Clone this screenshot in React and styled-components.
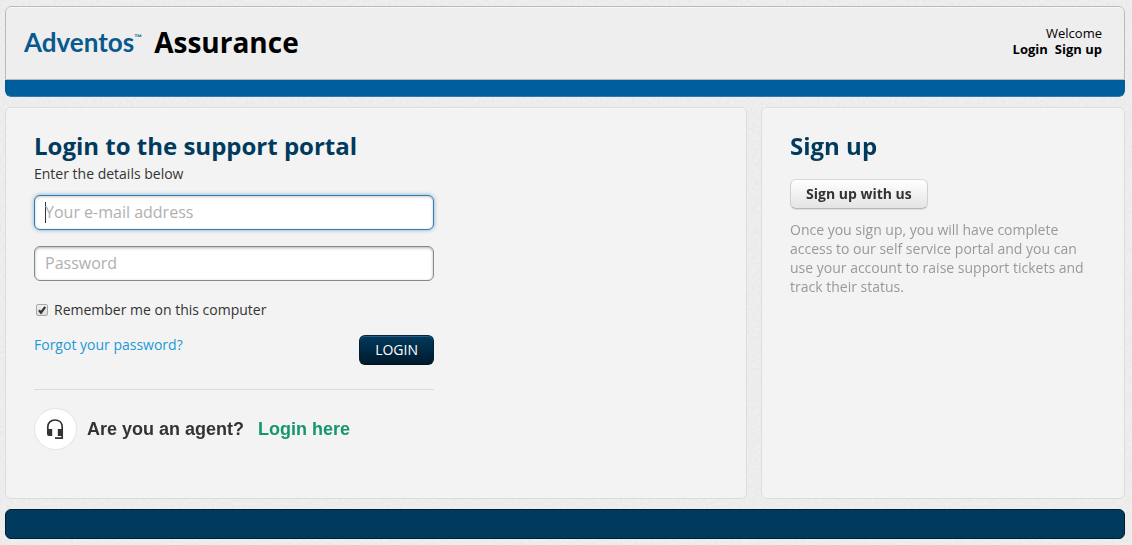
import React from "react";
import styled, { createGlobalStyle } from "styled-components";

const GlobalStyle = createGlobalStyle`
  *, *::before, *::after { box-sizing: border-box; }
  body {
    margin: 0;
    background: #efefef;
    color: #333;
    font-family: "Open Sans", "Noto Sans", sans-serif;
    font-size: 14px;
    line-height: 19px;
  }
  h1, h2, p { margin: 0; }
  a { text-decoration: none; }
  input, button { font-family: inherit; }
`;

const Texture = styled.svg`
  position: fixed;
  inset: 0;
  z-index: -1;
  width: 100%;
  height: 100%;
`;

const Page = styled.div`
  display: flex;
  flex-direction: column;
  gap: 10px;
  padding: 6px 7px 6px 5px;
`;

const Header = styled.header`
  border-radius: 6px;
  overflow: hidden;
`;

const Masthead = styled.div`
  display: flex;
  justify-content: space-between;
  align-items: center;
  min-height: 74px;
  padding: 0 22px 4px 18px;
  background: #eee;
  border: 1px solid #b9b9b9;
  border-radius: 6px 6px 0 0;
  box-shadow: inset 0 1px 0 #f8f8f8;
`;

const Brand = styled.div`
  display: flex;
  align-items: center;
  gap: 12px;
  padding-top: 2px;
`;

const Logo = styled.a`
  display: flex;
  color: #075990;
  font-family: Lato, sans-serif;
  font-size: 26px;
  font-weight: 700;
  line-height: 36px;
`;

const Trademark = styled.span`
  font-family: "Liberation Sans", sans-serif;
  font-size: 8px;
  line-height: 28px;
`;

const BrandTitle = styled.h1`
  color: #000;
  font-size: 28px;
  font-weight: 700;
  line-height: 36px;
`;

const Account = styled.nav`
  color: #000;
  font-size: 13px;
  line-height: 16px;
  text-align: right;
  a { color: #000; font-weight: 700; }
`;

const AccountLinks = styled.div`
  display: flex;
  justify-content: flex-end;
  gap: 7px;
`;

const AccentBar = styled.div`
  height: 17px;
  background: #005e9c;
  border-bottom: 1px solid #2d7cb0;
  border-radius: 0 0 6px 6px;
`;

const Columns = styled.main`
  display: grid;
  grid-template-columns: minmax(0, 53fr) minmax(0, 26fr);
  gap: 14px;
`;

const Card = styled.section`
  min-height: 392px;
  padding: 22px 28px 48px;
  background: #f3f3f3;
  border: 1px solid #dcdcdc;
  border-radius: 6px;
  box-shadow: inset 0 1px 0 #f8f8f8;
`;

const Heading = styled.h2`
  padding-bottom: 2px;
  color: #003a5d;
  font-size: 24px;
  font-weight: 700;
  line-height: 32px;
`;

const Form = styled.form`
  display: flex;
  flex-direction: column;
  max-width: 400px;
`;

const Fields = styled.div`
  display: flex;
  flex-direction: column;
  gap: 16px;
  padding-top: 12px;
`;

const Field = styled.input`
  width: 100%;
  height: 35px;
  padding: 0 10px 2px;
  color: #333;
  background: #fff;
  border: 1px solid #888;
  border-radius: 6px;
  outline: none;
  box-shadow: inset 0 1px 3px rgba(0, 0, 0, 0.3);
  font-size: 16px;
  &::placeholder { color: #b0b0b0; opacity: 1; }
  &:focus {
    border-color: #2e7db3;
    box-shadow: 0 0 4px rgba(46, 125, 179, 0.6), inset 0 1px 3px rgba(0, 0, 0, 0.2);
  }
  &:focus:placeholder-shown {
    caret-color: transparent;
    background: linear-gradient(#333, #333) 10px 6px / 1px 21px no-repeat #fff;
  }
`;

const Remember = styled.label`
  display: flex;
  align-items: center;
  gap: 6px;
  padding: 19px 0 0 2px;
`;

const TickBox = styled.span`
  display: grid;
  width: 12px;
  height: 12px;
  input, svg { grid-area: 1 / 1; width: 12px; height: 12px; margin: 0; }
  input {
    appearance: none;
    background: linear-gradient(#f0f0f0, #dcdcdc);
    border: 1px solid #a8a8a8;
    border-radius: 2px;
  }
  svg { pointer-events: none; }
  input:not(:checked) + svg { visibility: hidden; }
`;

const Actions = styled.div`
  display: flex;
  justify-content: space-between;
  align-items: flex-start;
  padding: 16px 0 24px;
  border-bottom: 1px solid #dbdbdb;
`;

const ForgotLink = styled.a`
  color: #2199d8;
`;

const Button = styled.button`
  height: 30px;
  padding: 0 15px 2px;
  border: 1px solid;
  border-radius: 6px;
  font-size: 14px;
  line-height: 19px;
`;

const LoginButton = styled(Button)`
  color: #fff;
  background: linear-gradient(#003a5f, #001a2b);
  border-color: #00263f #001f33 #00121f;
  box-shadow: inset 0 1px 0 #2b5c7c;
`;

const SignUpButton = styled(Button)`
  margin: 15px 0 11px;
  color: #333;
  background: linear-gradient(#fff, #e4e4e4);
  border-color: #d8d8d8 #d0d0d0 #b8b8b8;
  box-shadow: 0 1px 1px rgba(0, 0, 0, 0.08);
  font-weight: 700;
`;

const Agent = styled.div`
  display: flex;
  align-items: center;
  padding-top: 18px;
  font-family: "Liberation Sans", Arial, sans-serif;
  font-size: 18px;
  font-weight: 700;
  line-height: 24px;
  a { margin-left: 14px; color: #169670; }
`;

const AgentBadge = styled.span`
  display: grid;
  place-items: center;
  width: 43px;
  height: 42px;
  margin-right: 10px;
  background: #fff;
  border: 1px solid #e4e4e4;
  border-radius: 50%;
`;

const Note = styled.p`
  color: #999;
`;

const Footer = styled.footer`
  height: 30px;
  background: #003a5d;
  border: 1px solid #001e30;
  border-radius: 6px;
`;

function HeadsetIcon() {
  return (
    <svg width="19" height="22" viewBox="0 0 19 22" aria-hidden="true">
      <path d="M1.8 12V9C1.8 4.8 4.8 2 9 2s7.2 2.8 7.2 7v11.2H9" fill="none" stroke="#333" strokeWidth="1.7" />
      <path d="M1 11h5.2v7H3a2 2 0 0 1-2-2zM11.8 11H17v7h-5.2z" fill="#333" />
    </svg>
  );
}

export default function App() {
  return (
    <>
      <GlobalStyle />
      <Texture aria-hidden="true">
        <filter id="paper">
          <feTurbulence type="fractalNoise" baseFrequency="0.35" numOctaves="2" stitchTiles="stitch" />
          <feColorMatrix values="0 0 0 0 0  0 0 0 0 0  0 0 0 0 0  0.05 0 0 0 -0.015" />
        </filter>
        <rect width="100%" height="100%" filter="url(#paper)" />
      </Texture>
      <Page>
        <Header>
          <Masthead>
            <Brand>
              <Logo href="#">Adventos<Trademark>™</Trademark></Logo>
              <BrandTitle>Assurance</BrandTitle>
            </Brand>
            <Account>
              <div>Welcome</div>
              <AccountLinks>
                <a href="#login">Login</a>
                <a href="#signup">Sign up</a>
              </AccountLinks>
            </Account>
          </Masthead>
          <AccentBar />
        </Header>
        <Columns>
          <Card id="login">
            <Heading>Login to the support portal</Heading>
            <p>Enter the details below</p>
            <Form onSubmit={(e) => e.preventDefault()}>
              <Fields>
                <Field type="email" aria-label="Your e-mail address" placeholder="Your e-mail address" autoFocus />
                <Field type="password" aria-label="Password" placeholder="Password" />
              </Fields>
              <Remember>
                <TickBox>
                  <input type="checkbox" defaultChecked />
                  <svg viewBox="0 0 12 12" aria-hidden="true">
                    <path d="M3 6.2l2 2.4 4.2-5.8" fill="none" stroke="#333" strokeWidth="2.2" />
                  </svg>
                </TickBox>
                Remember me on this computer
              </Remember>
              <Actions>
                <ForgotLink href="#forgot">Forgot your password?</ForgotLink>
                <LoginButton type="submit">LOGIN</LoginButton>
              </Actions>
              <Agent>
                <AgentBadge><HeadsetIcon /></AgentBadge>
                Are you an agent?
                <a href="#agent">Login here</a>
              </Agent>
            </Form>
          </Card>
          <Card id="signup">
            <Heading>Sign up</Heading>
            <SignUpButton type="button">Sign up with us</SignUpButton>
            <Note>
              Once you sign up, you will have complete access to our self service portal and you can use
              your account to raise support tickets and track their status.
            </Note>
          </Card>
        </Columns>
        <Footer />
      </Page>
    </>
  );
}
